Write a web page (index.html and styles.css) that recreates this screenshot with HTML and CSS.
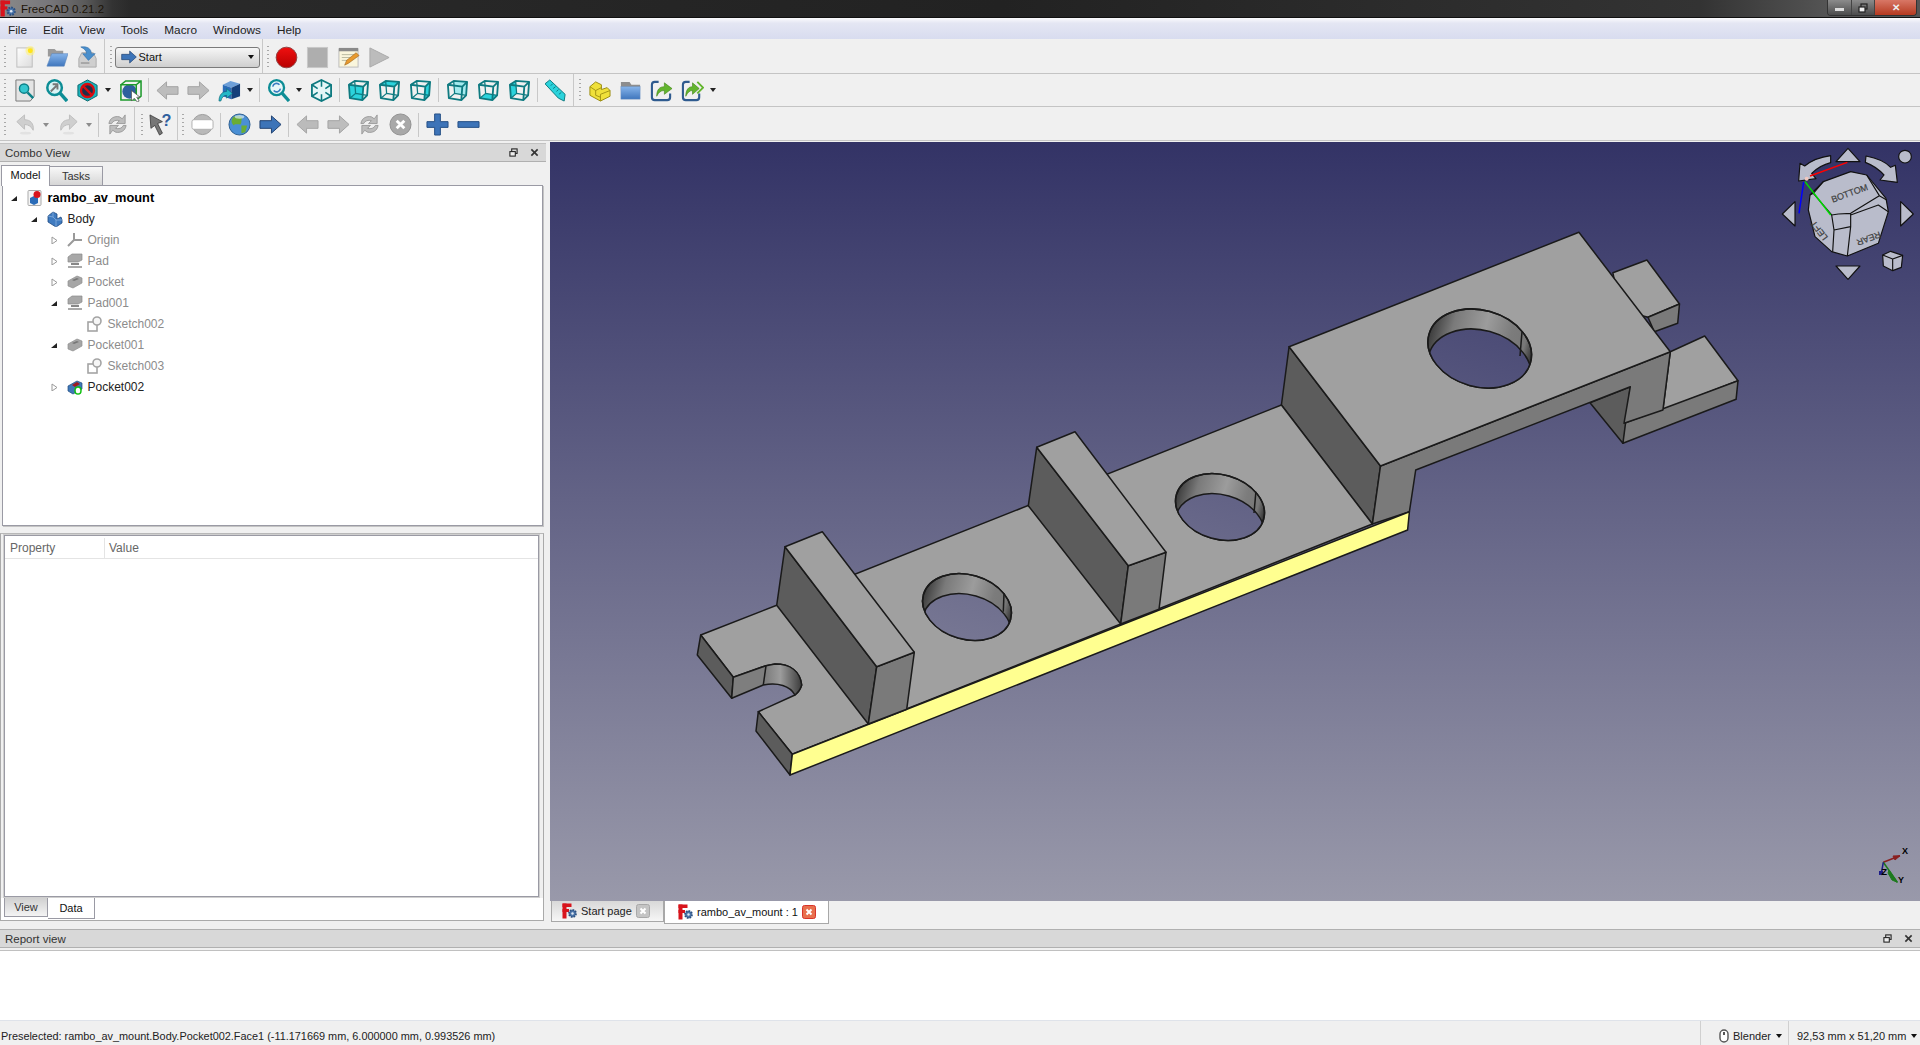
FILE: index.html
```html
<!DOCTYPE html>
<html lang="en">
<head>
<meta charset="utf-8">
<title>FreeCAD 0.21.2</title>
<link rel="stylesheet" href="styles.css">
</head>
<body>
<svg class="defs" xmlns="http://www.w3.org/2000/svg">
  <defs>
    <linearGradient id="gBlue" x1="0" y1="0" x2="0" y2="1"><stop offset="0" stop-color="#86b4ea"/><stop offset="1" stop-color="#3f76bd"/></linearGradient>
    <linearGradient id="gPage" x1="0" y1="0" x2="1" y2="1"><stop offset="0" stop-color="#fff"/><stop offset="1" stop-color="#dcdcdc"/></linearGradient>
    <linearGradient id="gRed" x1="0" y1="0" x2="0" y2="1"><stop offset="0" stop-color="#f01010"/><stop offset="1" stop-color="#b80000"/></linearGradient>
    <symbol id="logo" viewBox="0 0 16 16">
      <rect x="0.5" y="0.5" width="4" height="15" fill="#d8141c"/><rect x="0.5" y="0.5" width="9" height="3.5" fill="#d8141c"/><rect x="0.5" y="6" width="6.5" height="3" fill="#d8141c"/>
      <circle cx="10.5" cy="10.5" r="3.4" fill="#4e78ad" stroke="#2c5080" stroke-width="2" stroke-dasharray="1.6 1"/><circle cx="10.5" cy="10.5" r="1.2" fill="#dfe8f2"/>
    </symbol>
    <symbol id="i-new" viewBox="0 0 24 24"><rect x="3" y="2" width="16" height="20" fill="url(#gPage)" stroke="#bdbdbd"/><circle cx="17" cy="5" r="5" fill="#fff27a" opacity=".6"/><circle cx="17" cy="5" r="2.6" fill="#ffe41a"/></symbol>
    <symbol id="i-open" viewBox="0 0 24 24"><path d="M3 3h7l2 2h7v6H3z" fill="#9a9a9a"/><path d="M7 8H24L20 21H2z" fill="url(#gBlue)" stroke="#5b86bd" stroke-width=".6"/></symbol>
    <symbol id="i-save" viewBox="0 0 24 24"><path d="M3 13 6 7H18L21 13V22H3Z" fill="#cfcfcf" stroke="#aaa"/><rect x="5" y="17" width="9" height="1.5" fill="#999"/><path d="M5 1C12 0 16 3 16 8H20L13 15 7 8H11C11 5 9 3 5 1Z" fill="#4a8fcc" stroke="#2f6da8" stroke-width=".6"/></symbol>
    <symbol id="i-rec" viewBox="0 0 24 24"><circle cx="12" cy="12" r="10.8" fill="url(#gRed)" stroke="#8f4040"/></symbol>
    <symbol id="i-stop" viewBox="0 0 24 24"><rect x="1.5" y="1.5" width="21" height="21" fill="#aeaeae" stroke="#c8c8c8"/></symbol>
    <symbol id="i-edit" viewBox="0 0 24 24"><rect x="2" y="3" width="20" height="19" fill="#faf6dc" stroke="#bbb"/><rect x="2" y="2" width="20" height="3.5" fill="#8a8a8a"/><path d="M5 9h14M5 12h14M5 15h9" stroke="#b9b9a0"/><path d="M8 20 10 15 20 7 23 10 12 18Z" fill="#e89a2e" stroke="#9a5e14" stroke-width=".6"/></symbol>
    <symbol id="i-play" viewBox="0 0 24 24"><path d="M2 2 22 12 2 22Z" fill="#bcbcbc" stroke="#a8a8a8"/></symbol>
    <symbol id="i-fitall" viewBox="0 0 24 24"><path d="M2 1H21V18L17 23H2Z" fill="#e4e4e4" stroke="#777"/><circle cx="10.5" cy="10" r="4.8" fill="#36c7cf" stroke="#0c8088" stroke-width="1.5"/><path d="M14 14 20 20" stroke="#0c8088" stroke-width="2.6"/></symbol>
    <symbol id="i-fitsel" viewBox="0 0 24 24"><circle cx="10" cy="9" r="7.6" fill="#d9f3f5" stroke="#0d8d95" stroke-width="2.6"/><path d="M15 14 23 23" stroke="#0d8d95" stroke-width="3.6"/><path d="M6 13 12 7M8 5.500H13V11" fill="none" stroke="#777" stroke-width="2"/></symbol>
    <symbol id="i-draw" viewBox="0 0 24 24"><path d="M12 1 22 6.500V17.500L12 23 2 17.500V6.500Z" fill="#17b3bc" stroke="#0a666c"/><circle cx="12" cy="12" r="6.800" fill="#1d2f4a" stroke="#d80c10" stroke-width="2.400"/><path d="M7.500 7.500 16.500 16.500" stroke="#d80c10" stroke-width="2.400"/></symbol>
    <symbol id="i-bbox" viewBox="0 0 24 24"><circle cx="11" cy="13" r="7.500" fill="#2d5f9e"/><g fill="none" stroke="#1d9a2c" stroke-width="1.600"><path d="M2 6H18V22H2Z"/><path d="M2 6 7 2H23V18L18 22M18 6 23 2"/></g><path d="M13 12 13 23 16 20 19 24 21 23 18.500 19 22 19Z" fill="#fff" stroke="#444" stroke-width=".7"/></symbol>
    <symbol id="i-back" viewBox="0 0 24 24"><path d="M1 12 11 3V8H23V16H11V21Z" fill="#bdbdbd" stroke="#a2a2a2"/></symbol>
    <symbol id="i-fwd" viewBox="0 0 24 24"><path d="M23 12 13 3V8H1V16H13V21Z" fill="#bdbdbd" stroke="#a2a2a2"/></symbol>
    <symbol id="i-sync" viewBox="0 0 24 24"><path d="M5 6 13 2 23 5 14 9Z" fill="#6d9fd8"/><path d="M5 6 14 9V21L5 18Z" fill="#2a6cb8"/><path d="M14 9 23 5V18L14 21Z" fill="#143f7a"/><path d="M1 23C1 16 5 13 9 13V10L15 15 9 20V17C6 17 4 19 3 23Z" fill="#25b8c8" stroke="#0c5f6c" stroke-width=".6"/></symbol>
    <symbol id="i-zoom" viewBox="0 0 24 24"><circle cx="10" cy="9" r="7.800" fill="#e8f7f8" stroke="#0d8d95" stroke-width="2.400"/><path d="M15 14 23 23" stroke="#0d8d95" stroke-width="3.400"/><path d="M6 8A4 4 0 0 1 13 6M14 10A4 4 0 0 1 7 12" fill="none" stroke="#3a7cc0" stroke-width="1.600"/></symbol>
    <g id="wire" fill="none" stroke="#0e7a80" stroke-width="1.900" stroke-linejoin="round"><path d="M2 6 8 2 22 3 21 17 16 22 3 20Z"/><path d="M2 6 17 8 16 22M17 8 22 3"/><path d="M8 2 9 15 21 17M9 15 3 20" stroke-width="1.300"/></g>
    <symbol id="i-iso" viewBox="0 0 24 24"><path d="M12 1 22 6V18L12 23 2 18V6Z" fill="#e6f6f7" stroke="#0e7a80" stroke-width="1.900"/><path d="M12 1V8M2 6 8 10M22 6 16 10M2 18 8 14M22 18 16 14M12 23V16" fill="none" stroke="#0e7a80" stroke-width="1.600"/></symbol>
    <symbol id="i-front" viewBox="0 0 24 24"><path d="M2 6 17 8 16 22 3 20Z" fill="#2bd3dc"/><use href="#wire"/></symbol>
    <symbol id="i-top" viewBox="0 0 24 24"><path d="M2 6 8 2 22 3 17 8Z" fill="#2bd3dc"/><use href="#wire"/></symbol>
    <symbol id="i-right" viewBox="0 0 24 24"><path d="M17 8 22 3 21 17 16 22Z" fill="#2bd3dc"/><use href="#wire"/></symbol>
    <symbol id="i-rear" viewBox="0 0 24 24"><path d="M8 2 22 3 21 17 9 15Z" fill="#a4eaee"/><use href="#wire"/></symbol>
    <symbol id="i-bottom" viewBox="0 0 24 24"><path d="M3 20 9 15 21 17 16 22Z" fill="#2bd3dc"/><use href="#wire"/></symbol>
    <symbol id="i-left" viewBox="0 0 24 24"><path d="M2 6 8 2 9 15 3 20Z" fill="#2bd3dc"/><use href="#wire"/></symbol>
    <symbol id="i-measure" viewBox="0 0 24 24"><path d="M0 5 5 1 21 16 20 23 14 20Z" fill="#2bd3dc" stroke="#0e7a80"/><path d="M8 5 6 7M11 8 8.500 10M14 11 12 13M17 14 14.500 16" stroke="#0e7a80"/></symbol>
    <symbol id="i-part" viewBox="0 0 24 24"><path d="M2 8 8 3 14 6V11L20 9 23 12V18L13 23 2 17Z" fill="#efe03a" stroke="#9a8c10"/><path d="M2 8 8 12V17M8 12 14 9M13 23V16L23 12M8 17 13 19" fill="none" stroke="#9a8c10" stroke-width=".9"/></symbol>
    <symbol id="i-folder" viewBox="0 0 24 24"><path d="M2 3H11L13 6H22V12H2Z" fill="#8d8d8d"/><rect x="2" y="8" width="20" height="13" fill="url(#gBlue)" stroke="#6f93c4" stroke-width=".5"/></symbol>
    <symbol id="i-link" viewBox="0 0 24 24"><path d="M9 3H5Q2 3 2 6V19Q2 22 5 22H18Q21 22 21 19V15" fill="none" stroke="#2f5b8f" stroke-width="2.200"/><path d="M7 18C7 11 10 8 15 8V4L23 10 15 16V12C11 12 9 14 7 18Z" fill="#63b52e" stroke="#3d7f14" stroke-width=".6"/></symbol>
    <symbol id="i-link2" viewBox="0 0 24 24"><path d="M9 3H5Q2 3 2 6V19Q2 22 5 22H16Q19 22 19 19V15" fill="none" stroke="#2f5b8f" stroke-width="2.200"/><path d="M5 18C5 11 8 8 12 8V4L19 10 12 16V12C9 12 7 14 5 18Z" fill="#63b52e" stroke="#3d7f14" stroke-width=".6"/><path d="M17 3 23 9 17 15" fill="none" stroke="#63b52e" stroke-width="2"/></symbol>
    <symbol id="i-undo" viewBox="0 0 24 24"><path d="M3 9 11 2V7C17 7 21 11 20 18 18 14 15 12 11 12V17Z" fill="#cfcfcf" stroke="#bdbdbd"/><ellipse cx="12" cy="21" rx="6" ry="1.500" fill="#e2e2e2"/></symbol>
    <symbol id="i-redo" viewBox="0 0 24 24"><path d="M21 9 13 2V7C7 7 3 11 4 18 6 14 9 12 13 12V17Z" fill="#cfcfcf" stroke="#bdbdbd"/><ellipse cx="12" cy="21" rx="6" ry="1.500" fill="#e2e2e2"/></symbol>
    <symbol id="i-refresh" viewBox="0 0 24 24"><path d="M3 11C4 5 9 3 14 4L17 6 20 2V11H11L14 8C11 7 7 8 6 11Z" fill="#bdbdbd" stroke="#8f8f8f" stroke-width=".8"/><path d="M21 13C20 19 15 21 10 20L7 18 4 22V13H13L10 16C13 17 17 16 18 13Z" fill="#bdbdbd" stroke="#8f8f8f" stroke-width=".8"/></symbol>
    <symbol id="i-what" viewBox="0 0 24 24"><path d="M1 2 14 9 9 11 14 21 11 23 6 13 2 16Z" fill="#777" stroke="#333" stroke-width=".8"/><text x="13" y="14" class="qm">?</text></symbol>
    <symbol id="i-webstop" viewBox="0 0 24 24"><circle cx="12" cy="12" r="10.500" fill="#b9b9b9" stroke="#9a9a9a"/><rect x="1" y="7" width="22" height="10" rx="2" fill="#fff" stroke="#b0b0b0"/></symbol>
    <symbol id="i-globe" viewBox="0 0 24 24"><circle cx="12" cy="12" r="11" fill="#4a8fd4" stroke="#2c5d8e"/><path d="M6 4C10 2 14 3 15 5 13 8 15 9 13 12 10 12 7 11 6 13 3 10 3 7 6 4ZM14 13 20 13 18 20 14 21Z" fill="#6aad34"/><ellipse cx="12" cy="4" rx="5" ry="2" fill="#d6e8f8" opacity=".7"/></symbol>
    <symbol id="i-next" viewBox="0 0 24 24"><path d="M1 8H13V3L23 12 13 21V16H1Z" fill="#3d74b8" stroke="#1e3f6e"/></symbol>
    <symbol id="i-prev" viewBox="0 0 24 24"><path d="M1 12 11 3V8H23V16H11V21Z" fill="#bbb" stroke="#a5a5a5"/></symbol>
    <symbol id="i-x" viewBox="0 0 24 24"><circle cx="12" cy="12" r="11" fill="#a8a8a8" stroke="#8f8f8f"/><path d="M8 8 16 16M16 8 8 16" stroke="#fff" stroke-width="3"/></symbol>
    <symbol id="i-plus" viewBox="0 0 24 24"><path d="M9 1H15V9H23V15H15V23H9V15H1V9H9Z" fill="#3d74b8" stroke="#234d84"/></symbol>
    <symbol id="i-minus" viewBox="0 0 24 24"><path d="M1 9H23V15H1Z" fill="#3d74b8" stroke="#234d84"/></symbol>
    <symbol id="t-doc" viewBox="0 0 16 16"><rect x="1" y="0.500" width="13" height="15" rx="1" fill="#f4f4f4" stroke="#aaa"/><path d="M3 8 7 6 11 8V13L7 15 3 13Z" fill="#2a6cb8"/><circle cx="10" cy="4.500" r="3.500" fill="#d9141c"/></symbol>
    <symbol id="t-body" viewBox="0 0 16 16"><path d="M1 5 6 1 10 3V8L14 6 15 9V12L9 16 1 11Z" fill="#3f7bc0" stroke="#1f4a80" stroke-width=".8"/><path d="M6 1V6L1 5M6 6 9 9V16M9 9 15 9" fill="none" stroke="#8fb5e0" stroke-width=".7"/></symbol>
    <symbol id="t-origin" viewBox="0 0 16 16"><path d="M7 8V1M7 8 1 14M7 8H15" fill="none" stroke="#9a9a9a" stroke-width="2"/></symbol>
    <symbol id="t-pad" viewBox="0 0 16 16"><path d="M1 4 5 1H15V7L11 9H1Z" fill="#a8a8a8" stroke="#8a8a8a" stroke-width=".7"/><path d="M4 10H12V12H4Z" fill="#888"/><path d="M1 13H15V15H1Z" fill="#aaa"/></symbol>
    <symbol id="t-pocket" viewBox="0 0 16 16"><path d="M1 7 10 2 15 4V9L6 14 1 12Z" fill="#a6a6a6" stroke="#8f8f8f" stroke-width=".7"/><path d="M5 6 10 4 12 5 7 7Z" fill="#777"/></symbol>
    <symbol id="t-sketch" viewBox="0 0 16 16"><rect x="1" y="6" width="9" height="9" fill="none" stroke="#a4a4a4" stroke-width="1.600"/><circle cx="10" cy="5" r="4" fill="#f6f6f6" stroke="#a4a4a4" stroke-width="1.600"/></symbol>
    <symbol id="t-pocket2" viewBox="0 0 16 16"><path d="M1 7 10 2 15 4V10L6 15 1 12Z" fill="#3f78b8" stroke="#1f4a80" stroke-width=".7"/><path d="M5 6 10 3 13 5 8 8Z" fill="#a01a20"/><ellipse cx="11" cy="11.500" rx="3" ry="3.600" fill="#fff" stroke="#10c010" stroke-width="1.500"/></symbol>
    <symbol id="exp-open" viewBox="0 0 8 8"><path d="M1 7 7 2V7Z" fill="#222"/></symbol>
    <symbol id="exp-closed" viewBox="0 0 8 8"><path d="M2 1 7 4.500 2 8Z" fill="#fff" stroke="#999"/></symbol>
    <symbol id="float" viewBox="0 0 10 10"><rect x="3" y="1" width="6" height="5" fill="none" stroke="#222" stroke-width="1.200"/><rect x="1" y="4" width="6" height="5" fill="#eee" stroke="#222" stroke-width="1.200"/></symbol>
    <symbol id="close" viewBox="0 0 10 10"><path d="M1.500 1.500 8.500 8.500M8.500 1.500 1.500 8.500" stroke="#333" stroke-width="1.800"/></symbol>
    <symbol id="mouse" viewBox="0 0 10 14"><rect x="1" y="1" width="8" height="12" rx="4" fill="#fff" stroke="#555" stroke-width="1.400"/><rect x="4" y="3" width="2" height="3" fill="#555"/></symbol>
    <symbol id="tabclose-g" viewBox="0 0 14 14"><rect x="0.500" y="0.500" width="13" height="13" rx="2" fill="#c4c4c4" stroke="#a8a8a8"/><path d="M4.500 4.500 9.500 9.500M9.500 4.500 4.500 9.500" stroke="#fff" stroke-width="2"/></symbol>
    <symbol id="tabclose-r" viewBox="0 0 14 14"><rect x="0.500" y="0.500" width="13" height="13" rx="2" fill="#e8704e" stroke="#d8342a"/><path d="M4.500 4.500 9.500 9.500M9.500 4.500 4.500 9.500" stroke="#fff" stroke-width="2"/></symbol>
  </defs>
</svg>

<div class="app">
  <header class="titlebar">
    <svg class="title-logo"><use href="#logo"/></svg>
    <span class="title-text">FreeCAD 0.21.2</span>
    <div class="winbtns">
      <span class="wb wb-min"><i class="wb-dash"></i></span>
      <span class="wb wb-max"><svg class="wb-ic"><use href="#float"/></svg></span>
      <span class="wb wb-close">✕</span>
    </div>
  </header>

  <nav class="menubar">
    <span class="menu">File</span><span class="menu">Edit</span><span class="menu">View</span><span class="menu">Tools</span><span class="menu">Macro</span><span class="menu">Windows</span><span class="menu">Help</span>
  </nav>

  <div class="toolbar tb1">
    <div class="tb-section s1">
      <i class="grip"></i>
      <span class="btn"><svg class="ic"><use href="#i-new"/></svg></span>
      <span class="btn"><svg class="ic"><use href="#i-open"/></svg></span>
      <span class="btn"><svg class="ic"><use href="#i-save"/></svg></span>
    </div>
    <div class="tb-section s2">
      <i class="grip"></i>
      <div class="combo"><svg class="combo-ic"><use href="#i-next"/></svg><span class="combo-text">Start</span><i class="combo-arrow"></i></div>
    </div>
    <div class="tb-section s3 last">
      <i class="grip"></i>
      <span class="btn"><svg class="ic"><use href="#i-rec"/></svg></span>
      <span class="btn"><svg class="ic"><use href="#i-stop"/></svg></span>
      <span class="btn"><svg class="ic"><use href="#i-edit"/></svg></span>
      <span class="btn"><svg class="ic"><use href="#i-play"/></svg></span>
    </div>
  </div>

  <div class="toolbar tb2">
    <div class="tb-section s1">
      <i class="grip"></i>
      <span class="btn"><svg class="ic"><use href="#i-fitall"/></svg></span>
      <span class="btn"><svg class="ic"><use href="#i-fitsel"/></svg></span>
      <span class="btn"><svg class="ic"><use href="#i-draw"/></svg></span><i class="drop"></i>
      <span class="btn"><svg class="ic"><use href="#i-bbox"/></svg></span><i class="sep"></i>
      <span class="btn"><svg class="ic"><use href="#i-back"/></svg></span>
      <span class="btn"><svg class="ic"><use href="#i-fwd"/></svg></span>
      <span class="btn"><svg class="ic"><use href="#i-sync"/></svg></span><i class="drop"></i><i class="sep"></i>
      <span class="btn"><svg class="ic"><use href="#i-zoom"/></svg></span><i class="drop"></i>
      <span class="btn"><svg class="ic"><use href="#i-iso"/></svg></span><i class="sep"></i>
      <span class="btn"><svg class="ic"><use href="#i-front"/></svg></span>
      <span class="btn"><svg class="ic"><use href="#i-top"/></svg></span>
      <span class="btn"><svg class="ic"><use href="#i-right"/></svg></span><i class="sep"></i>
      <span class="btn"><svg class="ic"><use href="#i-rear"/></svg></span>
      <span class="btn"><svg class="ic"><use href="#i-bottom"/></svg></span>
      <span class="btn"><svg class="ic"><use href="#i-left"/></svg></span><i class="sep"></i>
      <span class="btn"><svg class="ic"><use href="#i-measure"/></svg></span>
    </div>
    <div class="tb-section s3 last wide">
      <i class="grip"></i>
      <span class="btn"><svg class="ic"><use href="#i-part"/></svg></span>
      <span class="btn"><svg class="ic"><use href="#i-folder"/></svg></span>
      <span class="btn"><svg class="ic"><use href="#i-link"/></svg></span>
      <span class="btn"><svg class="ic"><use href="#i-link2"/></svg></span><i class="drop"></i>
    </div>
  </div>

  <div class="toolbar tb3">
    <div class="tb-section s1">
      <i class="grip"></i>
      <span class="btn"><svg class="ic"><use href="#i-undo"/></svg></span><i class="drop faded"></i>
      <span class="btn"><svg class="ic"><use href="#i-redo"/></svg></span><i class="drop faded"></i><i class="sep"></i>
      <span class="btn"><svg class="ic"><use href="#i-refresh"/></svg></span>
    </div>
    <div class="tb-section s3 wide">
      <i class="grip"></i>
      <span class="btn"><svg class="ic"><use href="#i-what"/></svg></span>
    </div>
    <div class="tb-section s3 last">
      <i class="grip"></i>
      <span class="btn"><svg class="ic"><use href="#i-webstop"/></svg></span><i class="sep"></i>
      <span class="btn"><svg class="ic"><use href="#i-globe"/></svg></span>
      <span class="btn"><svg class="ic"><use href="#i-next"/></svg></span><i class="sep"></i>
      <span class="btn"><svg class="ic"><use href="#i-prev"/></svg></span>
      <span class="btn"><svg class="ic"><use href="#i-fwd"/></svg></span>
      <span class="btn"><svg class="ic"><use href="#i-refresh"/></svg></span>
      <span class="btn"><svg class="ic"><use href="#i-x"/></svg></span><i class="sep"></i>
      <span class="btn"><svg class="ic"><use href="#i-plus"/></svg></span>
      <span class="btn"><svg class="ic"><use href="#i-minus"/></svg></span>
    </div>
  </div>

  <main class="workspace">
    <aside class="combo-dock">
      <div class="dock-title"><span class="dock-label">Combo View</span><svg class="dock-ic"><use href="#float"/></svg><svg class="dock-ic"><use href="#close"/></svg></div>
      <div class="tabs">
        <span class="tab tab-on">Model</span><span class="tab tab-off">Tasks</span>
      </div>
      <div class="tree">
        <div class="row l0 bold"><svg class="exp"><use href="#exp-open"/></svg><svg class="tic"><use href="#t-doc"/></svg><span>rambo_av_mount</span></div>
        <div class="row l1"><svg class="exp"><use href="#exp-open"/></svg><svg class="tic"><use href="#t-body"/></svg><span>Body</span></div>
        <div class="row l2 dim"><svg class="exp"><use href="#exp-closed"/></svg><svg class="tic"><use href="#t-origin"/></svg><span>Origin</span></div>
        <div class="row l2 dim"><svg class="exp"><use href="#exp-closed"/></svg><svg class="tic"><use href="#t-pad"/></svg><span>Pad</span></div>
        <div class="row l2 dim"><svg class="exp"><use href="#exp-closed"/></svg><svg class="tic"><use href="#t-pocket"/></svg><span>Pocket</span></div>
        <div class="row l2 dim"><svg class="exp"><use href="#exp-open"/></svg><svg class="tic"><use href="#t-pad"/></svg><span>Pad001</span></div>
        <div class="row l3 dim"><i class="exp"></i><svg class="tic"><use href="#t-sketch"/></svg><span>Sketch002</span></div>
        <div class="row l2 dim"><svg class="exp"><use href="#exp-open"/></svg><svg class="tic"><use href="#t-pocket"/></svg><span>Pocket001</span></div>
        <div class="row l3 dim"><i class="exp"></i><svg class="tic"><use href="#t-sketch"/></svg><span>Sketch003</span></div>
        <div class="row l2"><svg class="exp"><use href="#exp-closed"/></svg><svg class="tic"><use href="#t-pocket2"/></svg><span>Pocket002</span></div>
      </div>
      <div class="props-frame">
        <div class="props">
          <div class="props-head"><span class="ph-prop">Property</span><span class="ph-val">Value</span></div>
        </div>
        <div class="prop-tabs"><span class="ptab ptab-view">View</span><span class="ptab ptab-data">Data</span></div>
      </div>
    </aside>

    <section class="view-col">
      <svg class="viewport" viewBox="550 142 1370 759" xmlns="http://www.w3.org/2000/svg">
        <defs>
          <linearGradient id="bg" gradientUnits="userSpaceOnUse" x1="0" y1="142" x2="0" y2="901"><stop offset="0" stop-color="#333366"/><stop offset="1" stop-color="#9999aa"/></linearGradient>
          <linearGradient id="wallG" x1="0" y1="0" x2="1" y2="0"><stop offset="0" stop-color="#3c3c3c"/><stop offset=".2" stop-color="#7a7a7a"/><stop offset=".5" stop-color="#9c9c9c"/><stop offset=".75" stop-color="#7c7c7c"/><stop offset=".9" stop-color="#777"/><stop offset="1" stop-color="#333"/></linearGradient>
          <linearGradient id="notchG" gradientUnits="userSpaceOnUse" x1="766" y1="0" x2="802" y2="0"><stop offset="0" stop-color="#7e7e7e"/><stop offset=".4" stop-color="#9c9c9c"/><stop offset="1" stop-color="#3a3a3a"/></linearGradient>
          <clipPath id="h1"><ellipse cx="967" cy="607" rx="45.300" ry="32.300" transform="rotate(16 967 607)"/></clipPath>
          <clipPath id="h2"><ellipse cx="1220" cy="507" rx="45.300" ry="32.300" transform="rotate(16 1220 507)"/></clipPath>
          <clipPath id="h3"><ellipse cx="1479.700" cy="348.500" rx="52.700" ry="38.300" transform="rotate(15.500 1479.700 348.500)"/></clipPath>
        </defs>
        <rect x="550" y="142" width="1370" height="759" fill="url(#bg)"/>
        <g stroke="#1a1a1a" stroke-width="1.500" stroke-linejoin="round">
          <!-- rear prongs -->
          <polygon points="1612.900,272.700 1646.900,260 1679.500,304 1648,317.300 1620,310" fill="#a0a0a0"/>
          <polygon points="1648,317.300 1679.500,304 1677.700,323.300 1654.300,331.700" fill="#7a7a7a"/>
          <polygon points="1670.300,351.700 1704.700,336 1738,380.700 1662.900,410" fill="#a0a0a0"/>
          <polygon points="1624,423.300 1738,380.700 1736.100,399.300 1622.900,443.300" fill="#7a7a7a"/>
          <polygon points="1590,402.700 1630.300,386.700 1622.900,443.300" fill="#5c5c5c"/>
          <!-- raised block -->
          <polygon points="1289.100,346.700 1281.400,405 1372.400,524 1380.500,466" fill="#5c5c5c"/>
          <polygon points="1380.500,466 1670.300,351.700 1662.900,410 1624,423.300 1630.300,386.700 1415.700,470 1409.400,511.700 1372.400,524" fill="#7a7a7a"/>
          <polygon points="1289.100,346.700 1578.900,232.300 1670.300,351.700 1380.500,466" fill="#a0a0a0"/>
          <!-- base plate -->
          <path d="M700.700,635 L776.700,605.300 L1281.400,405 L1372.400,524 L792.300,754.300 L758.300,711.700 L795,695 Q800,691 801.700,685 C800,671 790,664 775,664 L766,665.700 L733.300,677.300 Z" fill="#a0a0a0"/>
          <polygon points="700.700,635 697.300,655 731.700,698.300 733.300,677.300" fill="#5c5c5c"/>
          <polygon points="758.300,711.700 756,731 790,775 792.300,754.300" fill="#5c5c5c"/>
          <path d="M733.300,677.300 L766,665.700 L775,664 C790,664 800,671 801.700,685 Q800,691 795,695 C790,686 778,682 763.300,685 L731.700,698.300 Z" fill="url(#notchG)"/>
          <path d="M766,665.700 763.300,685" fill="none"/>
          <polygon points="792.300,754.300 1409.400,511.700 1407.600,530 790,775" fill="#ffff90"/>
          <!-- ribs -->
          <polygon points="785,546.700 776.700,605.300 868.300,724 876.700,666.700" fill="#5c5c5c"/>
          <polygon points="876.700,666.700 914.300,652.300 906.700,709.300 868.300,724" fill="#7a7a7a"/>
          <polygon points="785,546.700 822.300,531.700 914.300,652.300 876.700,666.700" fill="#a0a0a0"/>
          <polygon points="1036.700,447.300 1028.300,505.700 1120.700,624 1128.300,565.700" fill="#5c5c5c"/>
          <polygon points="1128.300,565.700 1166,552.300 1159,609.300 1120.700,624" fill="#7a7a7a"/>
          <polygon points="1036.700,447.300 1075,431.700 1166,552.300 1128.300,565.700" fill="#a0a0a0"/>
          <!-- holes: wall, see-through opening clipped to the rim, rim outline -->
          <ellipse cx="967" cy="607" rx="45.300" ry="32.300" transform="rotate(16 967 607)" fill="url(#wallG)"/>
          <g clip-path="url(#h1)"><ellipse cx="967" cy="627" rx="45.300" ry="32.300" transform="rotate(16 967 627)" fill="url(#bg)"/></g>
          <ellipse cx="967" cy="607" rx="45.300" ry="32.300" transform="rotate(16 967 607)" fill="none"/>
          <path d="M1004,593.300 1003.300,611.700" fill="none"/>
          <ellipse cx="1220" cy="507" rx="45.300" ry="32.300" transform="rotate(16 1220 507)" fill="url(#wallG)"/>
          <g clip-path="url(#h2)"><ellipse cx="1220" cy="527" rx="45.300" ry="32.300" transform="rotate(16 1220 527)" fill="url(#bg)"/></g>
          <ellipse cx="1220" cy="507" rx="45.300" ry="32.300" transform="rotate(16 1220 507)" fill="none"/>
          <path d="M1255.900,491.700 1254,513" fill="none"/>
          <ellipse cx="1479.700" cy="348.500" rx="52.700" ry="38.300" transform="rotate(15.500 1479.700 348.500)" fill="url(#wallG)"/>
          <g clip-path="url(#h3)"><ellipse cx="1479.700" cy="368.500" rx="52.700" ry="38.300" transform="rotate(15.500 1479.700 368.500)" fill="url(#bg)"/></g>
          <ellipse cx="1479.700" cy="348.500" rx="52.700" ry="38.300" transform="rotate(15.500 1479.700 348.500)" fill="none"/>
          <path d="M1522,331.700 1520,356" fill="none"/>
        </g>

        <!-- navigation cube -->
        <g transform="translate(1760 130) scale(.33333)" class="navcube" stroke="#111" stroke-width="3.500" stroke-linejoin="round" fill="#b9bccb">
          <path d="M228 95 264 55 300 95Z"/><path d="M228 408H300L264 448Z"/><path d="M105 215 67 252 105 288Z"/><path d="M422 215 460 252 422 288Z"/>
          <path d="M212 77Q165 83 134 108L120 100 116 153 168 146 155 130Q180 106 212 98Z"/>
          <path d="M318 78Q370 88 392 112L406 106 412 157 360 150 372 135Q350 110 316 97Z"/>
          <circle cx="435" cy="80" r="19"/>
          <path d="M368 375 392 364 428 376 424 412 398 422 370 408Z"/><path d="M368 375 398 387 428 376M398 387V422" fill="none"/>
          <path d="M190 155 272 125 320 135 378 205 385 245 355 340 262 378 215 365 165 320 145 240 150 195Z"/>
          <path d="M190 155 160 190 215 255 235 252 272 250 358 197 320 135M358 197 380 210M272 250 272 290 262 378M272 255 355 225 385 245M215 255 222 300 218 365M222 300 272 290M160 190 150 195" fill="none"/>
          <text class="cube-t" transform="translate(218 218) rotate(-20)">BOTTOM</text>
          <text class="cube-t" transform="translate(358 304) rotate(160)">REAR</text>
          <text class="cube-t" transform="translate(205 322) rotate(232)">LEFT</text>
          <g fill="none" stroke-width="4.500"><path d="M150 138 262 97" stroke="#f00"/><path d="M131 156 117 250" stroke="#00f"/><path d="M135 155 212 255" stroke="#0d0"/></g>
          <circle cx="140" cy="146" r="6" fill="#f0c8c0" stroke="none"/>
        </g>

        <!-- axis cross -->
        <g class="axes">
          <path d="M1883.300 862.300 1900 855.700" stroke="#8a2020" stroke-width="1.500"/><path d="M1893 856 1900 855.700 1895 860Z" fill="#8a2020" stroke="#8a2020"/>
          <path d="M1883.300 862.300 1897.300 882.300" stroke="#1e7a1e" stroke-width="1.500"/><path d="M1889 870 1897.300 882.300 1892 880 1888 873Z" fill="#1e7a1e" stroke="#1e7a1e"/>
          <path d="M1883.300 862.300 1881 875" stroke="#1c1c88" stroke-width="1.500"/><rect x="1879" y="871" width="4" height="4" fill="#1c1c88"/>
          <text class="ax-t" x="1902" y="854">X</text><text class="ax-t" x="1898" y="883">Y</text><text class="ax-t" x="1881.500" y="875">Z</text>
        </g>
      </svg>
      <div class="doc-tabs">
        <div class="doc-tab dt-off"><svg class="dt-logo"><use href="#logo"/></svg><span>Start page</span><svg class="dt-x"><use href="#tabclose-g"/></svg></div>
        <div class="doc-tab dt-on"><svg class="dt-logo"><use href="#logo"/></svg><span>rambo_av_mount : 1</span><svg class="dt-x"><use href="#tabclose-r"/></svg></div>
      </div>
    </section>
  </main>

  <section class="report">
    <div class="dock-title report-title"><span class="dock-label">Report view</span><svg class="dock-ic"><use href="#float"/></svg><svg class="dock-ic"><use href="#close"/></svg></div>
    <div class="report-body"></div>
  </section>

  <footer class="statusbar">
    <span class="st-msg">Preselected: rambo_av_mount.Body.Pocket002.Face1 (-11.171669 mm, 6.000000 mm, 0.993526 mm)</span>
    <span class="st-nav"><svg class="st-mouse"><use href="#mouse"/></svg>Blender<i class="st-arrow"></i></span>
    <span class="st-dim">92,53 mm x 51,20 mm<i class="st-arrow"></i></span>
  </footer>
</div>
</body>
</html>
```
FILE: styles.css
```css
* { box-sizing: border-box; }
html, body { margin: 0; padding: 0; height: 100%; overflow: hidden; }
body { font-family: "Liberation Sans", Arial, sans-serif; font-size: 11px; color: #111; background: #f0f0f0; }
.defs { display: block; width: 0; height: 0; }
i { display: block; font-style: normal; }

.app { width: 1920px; height: 1045px; display: flex; flex-direction: column; overflow: hidden; }

/* title bar */
.titlebar { height: 18px; flex: none; display: flex; align-items: flex-start; border-bottom: 1px solid #111;
  background: linear-gradient(90deg, #8a8a8a 0, #77767a 50px, #5a5a5a 85px, #333 112px, #2a2a2a 130px, #222 1000px, #333 1700px, #555 1830px); }
.title-logo { width: 17px; height: 17px; flex: none; }
.title-text { margin-left: 4px; font-size: 11.500px; line-height: 18px; color: #1c1408; }
.winbtns { margin-left: auto; margin-right: 3px; display: flex; height: 16px; border: 1px solid #333; border-top: 0; border-radius: 0 0 4px 4px; overflow: hidden; }
.wb { display: flex; align-items: center; justify-content: center; height: 15px; border-right: 1px solid #444; }
.wb-min { width: 24px; background: linear-gradient(#8b8b8b, #4c4c4c); }
.wb-max { width: 23px; background: linear-gradient(#8b8b8b, #4c4c4c); }
.wb-close { width: 41px; border: 0; color: #eee; font-size: 10px; font-weight: 700; background: linear-gradient(#d87766, #b53a20); }
.wb-dash { width: 9px; height: 3px; background: #ddd; margin-top: 3px; }
.wb-ic { width: 10px; height: 10px; }

/* menu */
.menubar { height: 21px; flex: none; display: flex; padding-top: 5px; background: linear-gradient(#fbfbfd 0, #e4e6f3 25%, #d8dcef 100%); }
.menu { padding: 0 8px; line-height: 14px; font-size: 11.800px; color: #222; }

/* toolbars */
.toolbar { flex: none; display: flex; background: #f0f0f0; border-bottom: 1px solid #c4c4c4; }
.tb1 { height: 35px; }
.tb2 { height: 33px; }
.tb3 { height: 34px; }
.tb-section { display: flex; align-items: center; height: 100%; border-right: 1px solid #c8c8c8; }
.tb-section.last { border-right: 0; }
.s1 { padding: 0 1px 0 4px; }
.s1 .grip { margin-right: 3.500px; }
.s2 { padding: 0 2px 0 5px; }
.s2 .grip { margin-right: 3px; }
.s3 { padding: 0 1px 0 4px; }
.s3 .grip { margin-right: 2.500px; }
.s3.wide { padding-left: 5.500px; }
.tb3 .s3.wide { padding-left: 6px; }
.tb1 .tb-section, .tb3 .tb-section { padding-top: 2px; }
.grip { width: 2px; height: 22px; flex: none; background: repeating-linear-gradient(#a8a8a8 0 1.500px, transparent 1.500px 4px); }
.btn { width: 31px; height: 24px; flex: none; display: flex; align-items: center; justify-content: center; }
.ic { width: 23px; height: 23px; display: block; }
.sep { width: 6px; height: 24px; flex: none; background: linear-gradient(#c8c8c8, #c8c8c8) center / 1px 100% no-repeat; }
.drop { width: 12px; flex: none; height: 4px; }
.drop::after { content: ""; display: block; width: 0; height: 0; margin-left: 2px; border: 3.500px solid transparent; border-top: 4px solid #222; border-bottom: 0; }
.drop.faded::after { border-top-color: #8c8c8c; }
.combo { width: 145px; height: 21px; flex: none; display: flex; align-items: center; padding: 0 2px 0 5px; border: 1px solid #7a7a7a; border-radius: 3px; background: linear-gradient(#f6f6f6, #cfcfcf); }
.combo-ic { width: 16px; height: 16px; flex: none; }
.combo-text { margin-left: 2px; font-size: 11px; }
.combo-arrow { margin-left: auto; margin-right: 3px; width: 0; height: 0; border: 3.500px solid transparent; border-top: 4px solid #111; border-bottom: 0; }
.qm { font-family: "Liberation Sans", Arial, sans-serif; font-weight: 700; font-size: 17px; fill: #2f5f9e; }

/* workspace */
.workspace { flex: 1; min-height: 0; display: flex; }
.combo-dock { width: 550px; flex: none; display: flex; flex-direction: column; padding-top: 2px; }
.dock-title { height: 19px; flex: none; display: flex; align-items: center; gap: 12px; background: #d8d8d8; border-top: 1px solid #c2c2c2; border-bottom: 1px solid #b0b0b0; padding: 0 7px 0 5px; }
.dock-label { margin-right: auto; font-size: 11.500px; color: #333; }
.dock-ic { width: 9px; height: 9px; flex: none; }
.combo-dock > .dock-title { width: 546px; }

.tabs { display: flex; align-items: flex-end; height: 23px; padding: 2px 0 0 1px; flex: none; }
.tab { display: flex; align-items: center; justify-content: center; font-size: 11px; border: 1px solid #9a9aa4; border-bottom: 0; }
.tab-on { width: 49px; height: 21px; background: #fff; position: relative; top: 1px; padding-bottom: 2px; z-index: 1; }
.tab-off { width: 53px; height: 19px; border-left: 0; color: #333; background: linear-gradient(#f8f8f8, #d6d6d6); }
.tree { width: 541px; height: 341px; margin-left: 2px; flex: none; background: #fff; border: 1px solid #9a9aa4; box-shadow: 1px 1px 0 #c4c4c4; padding-top: 1px; }
.row { display: flex; align-items: center; height: 21px; font-size: 12px; color: #222; }
.row.bold { font-weight: 700; font-size: 12.800px; color: #000; }
.row.dim { color: #8c8c8c; }
.l0 { padding-left: 7px; }
.l1 { padding-left: 27px; }
.l2 { padding-left: 47px; }
.l3 { padding-left: 67px; }
.exp { width: 8px; height: 8px; flex: none; margin-right: 9px; }
.tic { width: 16px; height: 16px; flex: none; margin-right: 4.500px; }

.props-frame { width: 544px; height: 388px; margin-top: 7px; flex: none; border: 1px solid #aaa; border-top: 1px solid #b8b8b8; display: flex; flex-direction: column; background: #f0f0f0; padding-top: 1px; }
.props { height: 362px; width: 535px; margin-left: 3px; flex: none; background: #fff; border: 1px solid #9a9aa4; box-shadow: 0 0 0 1px #cfcfcf; }
.props-head { height: 23px; display: flex; align-items: center; padding-top: 2px; background: #fff; border-bottom: 1px solid #e4e4e4; color: #666; font-size: 12px; }
.ph-prop { width: 100px; padding-left: 5px; border-right: 1px solid #e4e4e4; line-height: 20px; }
.ph-val { padding-left: 4px; }
.prop-tabs { display: flex; align-items: flex-start; padding: 0 0 0 3px; margin-top: 1px; background: #fff; flex: 1; }
.ptab { display: flex; align-items: center; justify-content: center; height: 21px; font-size: 11px; }
.ptab-view { width: 44px; height: 19px; border: 1px solid #9a9aa4; border-top: 0; background: linear-gradient(#d0d0d0, #f4f4f4); color: #333; }
.ptab-data { width: 47px; background: #fff; border: 1px solid #9a9aa4; border-top: 0; border-left: 0; }

.view-col { flex: 1; min-width: 0; display: flex; flex-direction: column; padding-top: 1px; }
.viewport { display: block; width: 1370px; height: 759px; flex: none; }
.cube-t { font-family: "Liberation Sans", Arial, sans-serif; font-size: 27px; fill: #3c3c3c; stroke: #3c3c3c; stroke-width: .6px; }
.ax-t { font-family: "Liberation Sans", Arial, sans-serif; font-size: 9px; font-weight: 700; fill: #000; }
.doc-tabs { display: flex; align-items: flex-start; padding-left: 1px; flex: none; height: 24px; }
.doc-tab { display: flex; align-items: center; font-size: 11px; border: 1px solid #a8a8a8; border-top: 0; }
.dt-off { width: 113px; height: 21px; padding-left: 10px; background: linear-gradient(#d8d8d8, #f6f6f6); color: #222; }
.dt-on { width: 165px; height: 23px; padding-left: 13px; background: #fff; color: #111; }
.dt-logo { width: 16px; height: 16px; flex: none; margin-right: 3px; }
.dt-x { width: 14px; height: 14px; flex: none; margin-left: 4px; }

/* report */
.report { flex: none; margin-top: 6px; }
.report-title { height: 19px; border-top-color: #b0b0b0; }
.report-body { height: 71px; margin-top: 2px; background: #fff; border-top: 1px solid #c0c0c0; border-bottom: 1px solid #dfe3ea; }

/* status */
.statusbar { height: 24px; flex: none; display: flex; align-items: center; background: #f0f0f0; font-size: 11px; color: #222; }
.st-msg { flex: 1; padding: 5px 0 0 1px; font-size: 10.900px; }
.st-nav { width: 88px; height: 100%; display: flex; align-items: center; padding: 5px 0 0 18px; border-left: 1px solid #d0d0d0; }
.st-mouse { width: 10px; height: 14px; margin-right: 4px; flex: none; }
.st-dim { width: 132px; height: 100%; display: flex; align-items: center; padding: 5px 0 0 8px; border-left: 1px solid #d0d0d0; }
.st-arrow { margin-left: 5px; width: 0; height: 0; border: 3.500px solid transparent; border-top: 4px solid #111; border-bottom: 0; }
```
